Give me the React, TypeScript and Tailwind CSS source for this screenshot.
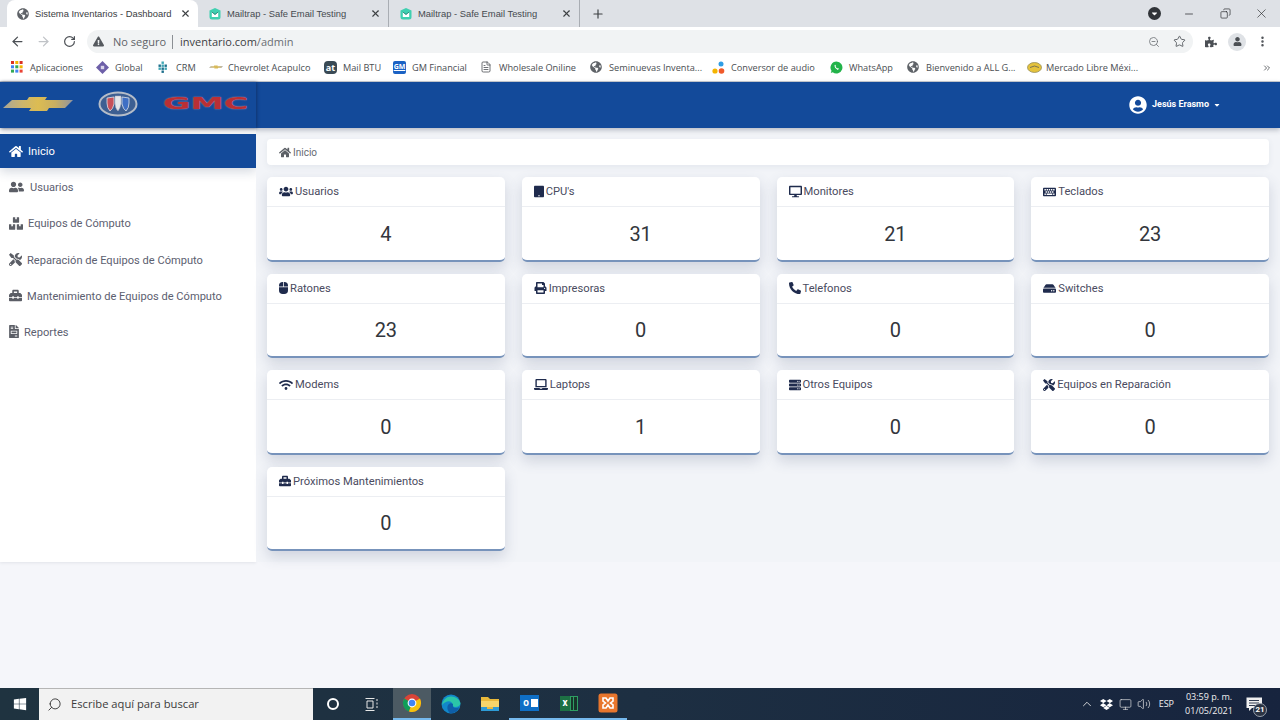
import React from "react";
import {
  FaHome, FaUserFriends, FaBoxes, FaTools, FaToolbox, FaFileInvoice, FaUsers, FaTablet, FaDesktop,
  FaKeyboard, FaMouse, FaPrint, FaPhoneAlt, FaHdd, FaWifi, FaLaptop, FaServer, FaUserCircle, FaCaretDown,
  FaGlobeAmericas, FaExclamationTriangle, FaPuzzlePiece, FaUser, FaDropbox, FaWindows,
} from "react-icons/fa";
import { ArrowLeft, ArrowRight, RotateCw, X, Plus, Minus, ZoomOut, Star, MoreVertical, Copy, FileText, ChevronsRight, Search, ChevronUp, Volume2, Monitor } from "lucide-react";

const Mail = () => (
  <svg width="14" height="14" viewBox="0 0 14 14" className="shrink-0">
    <path d="M7 1 L12.5 3.5 V10 Q12.5 12.5 10 12.5 H4 Q1.5 12.5 1.5 10 V3.5 Z" fill="#3fd0b0" />
    <path d="M3.8 5 L7 8 L10.2 5 V10 H3.8 Z" fill="#fff" />
    <path d="M3.8 5 L7 7.4 L10.2 5" stroke="#2f7f78" strokeWidth="0.9" fill="none" />
  </svg>
);

const Bowtie = ({ w, h, small }: { w: number; h: number; small?: boolean }) => (
  <svg width={w} height={h} viewBox="0 0 70 14" className="shrink-0">
    <defs>
      <linearGradient id={small ? "bt2" : "bt1"} x1="0" x2="1" y1="0" y2="0">
        <stop offset="0" stopColor="#a9a697" />
        <stop offset="0.28" stopColor="#cdb56c" />
        <stop offset="0.5" stopColor="#dcbc52" />
        <stop offset="0.75" stopColor="#c8ae62" />
        <stop offset="1" stopColor="#8f93a0" />
      </linearGradient>
    </defs>
    <polygon points="9,3 24,3 26,0 44,0 42,3 70,3 62,11 46,11 44,14 26,14 28,11 0,11" fill={`url(#${small ? "bt2" : "bt1"})`} />
  </svg>
);

const Buick = () => (
  <svg width="40" height="26" viewBox="0 0 40 26" className="shrink-0">
    <ellipse cx="20" cy="13" rx="18.5" ry="11.5" fill="#3d5f92" stroke="#b4bcc8" strokeWidth="2" />
    <path d="M9 7 L16 6 L16 13 Q15 18 12 20 Q9 17 9 12 Z" fill="#c6505a" stroke="#dfe3e8" strokeWidth="0.8" />
    <path d="M17 5 L23 5 L23 13 Q22 18 20 20 Q17 17 17 12 Z" fill="#e4e6ea" stroke="#aab" strokeWidth="0.5" />
    <path d="M24 6 L31 7 L31 12 Q31 17 28 20 Q25 18 24 13 Z" fill="#3f6fc4" stroke="#dfe3e8" strokeWidth="0.8" />
  </svg>
);

const Gmc = () => (
  <div className="w-[84px] shrink-0">
    <span className="inline-block origin-left scale-x-[2.03] font-['DejaVu_Sans',sans-serif] text-[16.5px] font-bold leading-none text-[#b92f35] [text-shadow:0_0_1px_#e8a0a0]">GMC</span>
  </div>
);

const tabs = [
  { active: true, title: "Sistema Inventarios - Dashboard" },
  { title: "Mailtrap - Safe Email Testing" },
  { title: "Mailtrap - Safe Email Testing" },
];

const TabStrip = () => (
  <div className="flex h-[27px] items-end bg-[#dee1e6] pl-[7px] pr-[11px] text-[#3c4043]">
    {tabs.map((t, i) => (
      <div
        key={i}
        className={
          t.active
            ? "flex h-[27px] w-[191px] items-center rounded-t-lg bg-white pl-[10px] pr-[7px]"
            : "flex h-[27px] w-[191px] items-center border-r border-[#a9adb3] pl-[10px] pr-[7px]"
        }
      >
        {t.active ? <FaGlobeAmericas className="h-[12px] w-[12px] shrink-0 text-[#5f6368]" /> : <Mail />}
        <span className={t.active ? "ml-[6px] flex-1 whitespace-nowrap pt-[1px] font-['Liberation_Sans',sans-serif] text-[9.4px] text-[#3c4043]" : "ml-[5px] flex-1 whitespace-nowrap pt-[1px] font-['Liberation_Sans',sans-serif] text-[9.4px] text-[#454a4f]"}>{t.title}</span>
        <X size={11} strokeWidth={2.4} className="shrink-0 text-[#3c4043]" />
      </div>
    ))}
    <div className="flex h-[27px] w-[36px] items-center justify-center">
      <Plus size={14} strokeWidth={2} className="text-[#3c4043]" />
    </div>
    <div className="flex-1" />
    <div className="flex h-[27px] items-center">
      <div className="flex h-[13px] w-[13px] items-center justify-center rounded-full bg-[#303338]">
        <FaCaretDown className="h-[9px] w-[9px] text-white" />
      </div>
      <Minus size={12} strokeWidth={1.4} className="ml-[22px] text-[#202124]" />
      <Copy size={11} strokeWidth={1.4} className="ml-[25px] -scale-x-100 text-[#202124]" />
      <X size={15} strokeWidth={1} className="ml-[23px] text-[#202124]" />
    </div>
  </div>
);

const Toolbar = () => (
  <div className="flex h-[27px] items-center bg-white pt-[2px] text-[#5f6368]">
    <ArrowLeft size={15} strokeWidth={2} className="ml-[10px] text-[#4b4f54]" />
    <ArrowRight size={15} strokeWidth={2} className="ml-[11px] text-[#c0c3c7]" />
    <RotateCw size={13} strokeWidth={2.2} className="ml-[12px] text-[#4b4f54]" />
    <div className="ml-[11px] flex h-[23px] w-[1106px] items-center rounded-full bg-[#f1f3f4] pl-[6px] pr-[7px]">
      <FaExclamationTriangle className="h-[11px] w-[11px] text-[#55595e]" />
      <span className="ml-[9px] pt-[1px] text-[11px] text-[#5f6368]">No seguro</span>
      <span className="ml-[6px] h-[14px] w-px bg-[#8b8f94]" />
      <span className="ml-[7px] pt-[1px] text-[11px] text-[#3c4043]">inventario.com<span className="text-[#6a6e73]">/admin</span></span>
      <div className="flex-1" />
      <ZoomOut size={12} strokeWidth={1.6} className="text-[#6b6f74]" />
      <Star size={13} strokeWidth={1.8} className="ml-[13px] text-[#5f6368]" />
    </div>
    <FaPuzzlePiece className="ml-[12px] h-[12px] w-[12px] text-[#4b4f54]" />
    <div className="ml-[11px] flex h-[18px] w-[18px] items-center justify-center rounded-full bg-[#dfe2e6]">
      <FaUser className="h-[9px] w-[9px] text-[#4b4f54]" />
    </div>
    <MoreVertical size={13} strokeWidth={2.6} className="ml-[10px] text-[#4b4f54]" />
  </div>
);

const AppsIcon = () => (
  <svg width="12" height="12" viewBox="0 0 12 12" className="shrink-0">
    {["#d93025", "#f4b400", "#d93025", "#4285f4", "#34a853", "#f4b400", "#34a853", "#4285f4", "#ea4335"].map((c, i) => (
      <rect key={i} x={(i % 3) * 4.3} y={Math.floor(i / 3) * 4.3} width="3" height="3" fill={c} />
    ))}
  </svg>
);

const marks: Record<string, React.ReactNode> = {
  apps: <AppsIcon />,
  global: (
    <svg width="13" height="13" viewBox="0 0 13 13" className="shrink-0">
      <polygon points="6.5,0 13,6.5 6.5,13 0,6.5" fill="#6d5fa8" />
      <rect x="4.8" y="4.8" width="3.4" height="3.4" fill="#d9d4ea" />
    </svg>
  ),
  crm: (
    <svg width="12" height="13" viewBox="0 0 12 13" className="shrink-0">
      {[[4, 0], [1, 3], [4, 3], [7, 3], [1, 6], [4, 6], [7, 6], [4, 9]].map(([x, y], i) => (
        <rect key={i} x={x + 0.5} y={y + 0.5} width="2.4" height="2.4" fill={i % 2 ? "#1d6f8c" : "#3fa7b5"} />
      ))}
    </svg>
  ),
  chevy: <Bowtie w={14} h={4} small />,
  at: <span className="flex h-[13px] w-[13px] shrink-0 items-center justify-center rounded-sm bg-[#3a4a55] text-[9px] font-bold text-white">at</span>,
  gm: <span className="flex h-[13px] w-[13px] shrink-0 items-center justify-center rounded-[2px] bg-[#1b62c4] text-[7px] font-bold text-white underline">GM</span>,
  doc: <FileText size={12} strokeWidth={1.6} className="shrink-0 text-[#4b4f54]" />,
  globe: <FaGlobeAmericas className="h-[12px] w-[12px] shrink-0 text-[#5f6368]" />,
  dots: (
    <svg width="13" height="14" viewBox="0 0 13 14" className="shrink-0">
      <circle cx="9" cy="3" r="2.5" fill="#2f9de4" />
      <circle cx="3" cy="10" r="2.6" fill="#f4b400" />
      <circle cx="9.5" cy="10" r="2.8" fill="#f0592a" />
    </svg>
  ),
  wa: (
    <svg width="13" height="13" viewBox="0 0 13 13" className="shrink-0">
      <path d="M6.5 0.5 A6 6 0 1 1 2.7 11.2 L0.8 12 L1.5 9.8 A6 6 0 0 1 6.5 0.5 Z" fill="#22b34a" />
      <path d="M4.6 4 Q4 6.8 7.8 9 L9 7.8 L7.8 7 L7.2 7.4 Q6 6.6 5.6 5.6 L6 5 L5.3 3.8 Z" fill="#fff" />
    </svg>
  ),
  ml: (
    <svg width="15" height="11" viewBox="0 0 15 11" className="shrink-0">
      <ellipse cx="7.5" cy="5.5" rx="7" ry="5" fill="#e4c23c" stroke="#8a8250" strokeWidth="0.7" />
      <path d="M3 5.5 Q7.5 2.5 12 5.5" stroke="#6b6a55" strokeWidth="0.9" fill="none" />
    </svg>
  ),
};

const bookmarks = [
  ["apps", "Aplicaciones", "w-[85px]"],
  ["global", "Global", "w-[61px]"],
  ["crm", "CRM", "w-[52px]"],
  ["chevy", "Chevrolet Acapulco", "w-[115px]"],
  ["at", "Mail BTU", "w-[69px]"],
  ["gm", "GM Financial", "w-[87px]"],
  ["doc", "Wholesale Oniline", "w-[110px]"],
  ["globe", "Seminuevas Inventa...", "w-[122px]"],
  ["dots", "Conversor de audio", "w-[118px]"],
  ["wa", "WhatsApp", "w-[77px]"],
  ["globe", "Bienvenido a ALL G...", "w-[120px]"],
  ["ml", "Mercado Libre Méxi...", "w-[235px]"],
];

const Bookmarks = () => (
  <div className="flex h-[28px] items-center border-b border-[#c9ccd1] bg-white pl-[11px] text-[#4a4e52]">
    {bookmarks.map(([m, label, w], i) => (
      <div key={i} className={`flex items-center ${w}`}>
        <span className="flex w-[19px] shrink-0 items-center">{marks[m]}</span>
        <span className="whitespace-nowrap text-[9.2px]">{label}</span>
      </div>
    ))}
    <ChevronsRight size={10} strokeWidth={2} className="text-[#4a4e52]" />
  </div>
);

const nav = [
  { icon: FaUserFriends, label: "Usuarios", gap: "ml-[6px]", cls: "h-[14px] w-[15px]" },
  { icon: FaBoxes, label: "Equipos de Cómputo", gap: "ml-[5px]", cls: "h-[13px] w-[14px]" },
  { icon: FaTools, label: "Reparación de Equipos de Cómputo", gap: "ml-[5px]", cls: "h-[13px] w-[13px]" },
  { icon: FaToolbox, label: "Mantenimiento de Equipos de Cómputo", gap: "ml-[5px]", cls: "h-[13px] w-[13px]" },
  { icon: FaFileInvoice, label: "Reportes", gap: "ml-[5px]", cls: "h-[13px] w-[10px]" },
];

const Sidebar = () => (
  <aside className="h-[434px] w-[256px] shrink-0 bg-white pt-[6px] shadow-[0_1px_3px_rgba(60,70,90,0.1)]">
    <div className="flex h-[34px] items-center bg-[#134a9a] pl-[9px] text-white shadow-[0_4px_10px_rgba(30,50,90,0.18)]">
      <FaHome className="h-[13px] w-[14px]" />
      <span className="ml-[5px] pt-[2px] text-[11.2px]">Inicio</span>
    </div>
    <div className="mt-[1px]">
      {nav.map((n) => (
        <div key={n.label} className="flex h-[36.2px] items-center pl-[9px] text-[#5c6070]">
          <n.icon className={`${n.cls} shrink-0 text-[#5b5e66]`} />
          <span className={`${n.gap} pt-[3px] text-[11.1px]`}>{n.label}</span>
        </div>
      ))}
    </div>
  </aside>
);

const cards = [
  { icon: FaUsers, label: "Usuarios", value: "4", cls: "h-[11px] w-[14px]" },
  { icon: FaTablet, label: "CPU's", value: "31", cls: "h-[13px] w-[10px]" },
  { icon: FaDesktop, label: "Monitores", value: "21", cls: "h-[13px] w-[13px]" },
  { icon: FaKeyboard, label: "Teclados", value: "23", cls: "h-[12px] w-[13px]" },
  { icon: FaMouse, label: "Ratones", value: "23", cls: "h-[12px] w-[9px]" },
  { icon: FaPrint, label: "Impresoras", value: "0", cls: "h-[12px] w-[13px]" },
  { icon: FaPhoneAlt, label: "Telefonos", value: "0", cls: "h-[12px] w-[12px]" },
  { icon: FaHdd, label: "Switches", value: "0", cls: "h-[13px] w-[13px]" },
  { icon: FaWifi, label: "Modems", value: "0", cls: "h-[12px] w-[14px]" },
  { icon: FaLaptop, label: "Laptops", value: "1", cls: "h-[13px] w-[14px]" },
  { icon: FaServer, label: "Otros Equipos", value: "0", cls: "h-[12px] w-[12px]" },
  { icon: FaTools, label: "Equipos en Reparación", value: "0", cls: "h-[12px] w-[12px]" },
  { icon: FaToolbox, label: "Próximos Mantenimientos", value: "0", cls: "h-[12px] w-[12px]" },
];

const Card = ({ c }: { c: (typeof cards)[number] }) => (
  <div className="flex h-[84.5px] flex-col rounded-[5px] border-b-[2px] border-[#7793bb] bg-white shadow-[0_6px_14px_rgba(70,85,120,0.2)]">
    <div className="flex h-[30px] shrink-0 items-center gap-[2px] border-b border-[#eceef2] pl-[12px]">
      <c.icon className={`${c.cls} shrink-0 text-[#1f2b4d]`} />
      <span className="pt-[2px] text-[11.2px] text-[#4a4b60]">{c.label}</span>
    </div>
    <div className="flex flex-1 items-center justify-center pt-[1px] text-[20px] leading-none text-[#33363c]">{c.value}</div>
  </div>
);

const Main = () => (
  <main className="flex-1 bg-[#f2f4f8] pl-[11px] pr-[11px] pt-[11px]">
    <div className="flex h-[26px] items-center gap-[2px] rounded-[4px] bg-white pl-[12px] text-[#666a72] shadow-[0_2px_6px_rgba(70,85,120,0.08)]">
      <FaHome className="h-[11px] w-[12px] text-[#5c6066]" />
      <span className="text-[10px]">Inicio</span>
    </div>
    <div className="mt-[12px] grid grid-cols-4 gap-x-[17px] gap-y-[12px]">
      {cards.map((c) => (
        <Card key={c.label} c={c} />
      ))}
    </div>
  </main>
);

const Chrome = () => (
  <svg width="20" height="20" viewBox="0 0 20 20">
    <circle cx="10" cy="10" r="9" fill="#db4437" />
    <path d="M10 10 L2.2 5.5 A9 9 0 0 0 7 18.5 Z" fill="#0f9d58" />
    <path d="M10 10 L7 18.5 A9 9 0 0 0 18.8 8 L18 5.5 Z" fill="#f4c20d" />
    <circle cx="10" cy="10" r="4.4" fill="#fff" />
    <circle cx="10" cy="10" r="3.3" fill="#4285f4" />
  </svg>
);
const Edge = () => (
  <svg width="20" height="20" viewBox="0 0 20 20">
    <circle cx="10" cy="10" r="9.5" fill="#1287c9" />
    <path d="M1 11 A9.5 9.5 0 0 1 19.5 9 Q19 13 14 13 Q11.5 13 12 10.5 Q10 6 6 7.5 Q2.5 8.5 1 11Z" fill="#2bc5a8" />
    <path d="M9 19.5 Q5 15 7 11 Q9 8 12 10 Q11 14 15 14 Q17 14 18.5 13 Q16 19 9 19.5 Z" fill="#0e5ea8" />
  </svg>
);
const Folder = () => (
  <svg width="18" height="16" viewBox="0 0 18 16">
    <path d="M0 1 H7 L9 3 H18 V15 H0 Z" fill="#e9b93b" />
    <rect x="0" y="5" width="18" height="10" fill="#f5d56b" />
    <rect x="0" y="11" width="18" height="4" fill="#2d9bd6" />
    <rect x="6" y="11" width="6" height="2" fill="#e9b93b" />
  </svg>
);
const Outlook = () => (
  <div className="flex h-[16px] w-[19px] items-center bg-[#0f6fc6] pl-[2px]">
    <span className="flex w-[9px] items-center justify-center text-[10px] font-bold leading-none text-white">o</span>
    <span className="flex h-[8px] w-[7px] items-center justify-center bg-white" />
  </div>
);
const Excel = () => (
  <div className="flex h-[17px] w-[18px] items-center">
    <span className="flex h-[15px] w-[10px] items-center justify-center bg-[#1d7044] text-[10px] font-bold leading-none text-white">x</span>
    <span className="grid h-[15px] w-[8px] grid-cols-2 border border-[#2e9e63] bg-[#18352b]"><span className="border-r border-[#2e9e63]" /></span>
  </div>
);
const Xampp = () => (
  <svg width="20" height="20" viewBox="0 0 20 20">
    <rect x="0.5" y="0.5" width="19" height="19" rx="2.5" fill="#e8762d" />
    <path d="M5 5 H8 L10 8 L12 5 H15 V8 L12.5 10 L15 12 V15 H12 L10 12 L8 15 H5 V12 L7.5 10 L5 8 Z" fill="none" stroke="#fff" strokeWidth="1.6" />
  </svg>
);

const Notify = () => (
  <svg width="17" height="15" viewBox="0 0 17 15" className="shrink-0">
    <path d="M0.5 0.5 H16 V11 H6 L3 14 V11 H0.5 Z" fill="#f0f0f0" />
    <path d="M3 3.5 H13 M3 6 H13 M3 8.5 H10" stroke="#1a2740" strokeWidth="0.9" />
  </svg>
);

const Taskbar = () => (
  <div className="flex h-[32px] shrink-0 items-center bg-gradient-to-r from-[#1f3340] via-[#1d2f42] to-[#17243e] text-white">
    <div className="flex w-[39px] justify-center">
      <FaWindows className="h-[14px] w-[14px]" />
    </div>
    <div className="flex h-[32px] w-[274px] items-center border-t border-[#b5b5b5] bg-[#f2f2f2] pl-[8px] text-[#3b3b3b]">
      <Search size={15} strokeWidth={1.4} className="-scale-x-100 text-[#2b2b2b]" />
      <span className="ml-[9px] font-['Open_Sans',sans-serif] text-[11.2px]">Escribe aquí para buscar</span>
    </div>
    <div className="flex w-[38px] justify-center pl-[2px]">
      <span className="h-[12px] w-[12px] rounded-full border-[2px] border-white" />
    </div>
    <div className="flex w-[42px] justify-center">
      <svg width="14" height="13" viewBox="0 0 14 13" fill="none" stroke="#e8e8e8" strokeWidth="1">
        <path d="M0.5 0.5 H9.5 M0.5 12.5 H9.5 M2 3 H8 V10 H2 Z M12 1 V3 M12 4.5 V6.5 M12 8 V10" />
      </svg>
    </div>
    <div className="flex h-[32px] w-[38px] items-center justify-center border-b-[2px] border-[#76b9ed] bg-[#4c5a63]">
      <Chrome />
    </div>
    <div className="flex w-[40px] justify-center"><Edge /></div>
    <div className="flex w-[38px] justify-center"><Folder /></div>
    <div className="flex h-[32px] w-[40px] items-center justify-center border-b-[2px] border-[#76b9ed]"><Outlook /></div>
    <div className="flex h-[32px] w-[40px] items-center justify-center border-b-[2px] border-[#76b9ed]"><Excel /></div>
    <div className="flex h-[32px] w-[38px] items-center justify-center border-b-[2px] border-[#76b9ed]"><Xampp /></div>
    <div className="flex-1" />
    <ChevronUp size={14} strokeWidth={1.5} className="text-[#e8e8e8]" />
    <FaDropbox className="ml-[6px] h-[13px] w-[13px]" />
    <Monitor size={13} strokeWidth={1.2} className="ml-[6px] text-[#e8e8e8]" />
    <Volume2 size={14} strokeWidth={1.2} className="ml-[5px] text-[#e8e8e8]" />
    <span className="ml-[8px] font-['Open_Sans',sans-serif] text-[9px] text-[#f0f0f0]">ESP</span>
    <div className="ml-[10px] flex w-[50px] flex-col items-center font-['Open_Sans',sans-serif] text-[9px] leading-[14px] text-[#f0f0f0]">
      <span>03:59 p. m.</span>
      <span>01/05/2021</span>
    </div>
    <div className="relative ml-[12px] mr-[17px] flex h-[32px] w-[17px] items-center">
      <Notify />
      <span className="absolute -right-[4px] bottom-[3px] flex h-[14px] w-[14px] items-center justify-center rounded-full border border-[#9aa2ad] bg-[#2b3444] text-[8px] font-bold text-white">21</span>
    </div>
  </div>
);

export default function App() {
  return (
    <div className="flex h-[720px] w-[1280px] flex-col overflow-hidden bg-[#f5f6fa] font-['Roboto',sans-serif]">
      <div className="shrink-0 font-['Open_Sans',sans-serif]">
        <TabStrip />
        <Toolbar />
        <Bookmarks />
      </div>
      <header className="z-10 flex h-[46px] shrink-0 items-center bg-[#134a9a] shadow-[0_2px_5px_rgba(40,50,70,0.3)]">
        <div className="flex h-[46px] w-[256px] items-center gap-[25px] pb-[3px] pl-[3px] shadow-[1px_0_3px_rgba(10,30,70,0.5)]">
          <Bowtie w={70} h={14} />
          <Buick />
          <Gmc />
        </div>
        <div className="flex-1" />
        <div className="flex items-center pb-[1px] pr-[59px] text-white">
          <FaUserCircle className="h-[18px] w-[18px]" />
          <span className="ml-[5px] text-[9px] font-bold">Jesús Erasmo</span>
          <FaCaretDown className="ml-[4px] h-[8px] w-[8px]" />
        </div>
      </header>
      <div className="min-h-0 flex-1">
        <div className="flex h-[434px]">
          <Sidebar />
          <Main />
        </div>
      </div>
      <Taskbar />
    </div>
  );
}
